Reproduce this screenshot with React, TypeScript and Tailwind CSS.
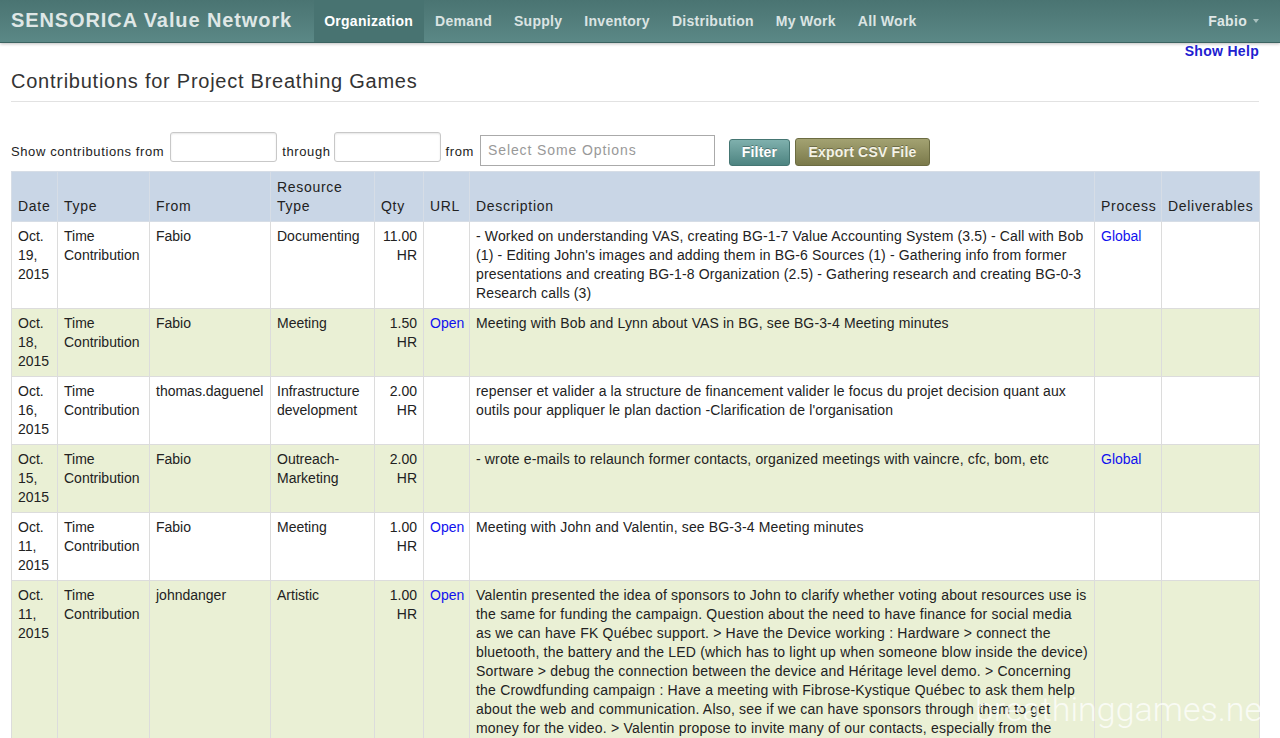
import React from 'react';

type Contribution = {
  date: string;
  type: string;
  from: string;
  resource: string;
  qty: string;
  url?: string;
  description: string;
  process?: string;
  loose?: boolean;
};

const contributions: Contribution[] = [
  {
    date: 'Oct. 19, 2015',
    type: 'Time Contribution',
    from: 'Fabio',
    resource: 'Documenting',
    qty: '11.00 HR',
    description:
      "- Worked on understanding VAS, creating BG-1-7 Value Accounting System (3.5) - Call with Bob (1) - Editing John's images and adding them in BG-6 Sources (1) - Gathering info from former presentations and creating BG-1-8 Organization (2.5) - Gathering research and creating BG-0-3 Research calls (3)",
    process: 'Global',
  },
  {
    date: 'Oct. 18, 2015',
    type: 'Time Contribution',
    from: 'Fabio',
    resource: 'Meeting',
    qty: '1.50 HR',
    url: 'Open',
    description: 'Meeting with Bob and Lynn about VAS in BG, see BG-3-4 Meeting minutes',
  },
  {
    date: 'Oct. 16, 2015',
    type: 'Time Contribution',
    from: 'thomas.daguenel',
    resource: 'Infrastructure development',
    qty: '2.00 HR',
    description:
      "repenser et valider a la structure de financement valider le focus du projet decision quant aux outils pour appliquer le plan daction -Clarification de l'organisation",
  },
  {
    date: 'Oct. 15, 2015',
    type: 'Time Contribution',
    from: 'Fabio',
    resource: 'Outreach-Marketing',
    qty: '2.00 HR',
    description: '- wrote e-mails to relaunch former contacts, organized meetings with vaincre, cfc, bom, etc',
    process: 'Global',
  },
  {
    date: 'Oct. 11, 2015',
    type: 'Time Contribution',
    from: 'Fabio',
    resource: 'Meeting',
    qty: '1.00 HR',
    url: 'Open',
    description: 'Meeting with John and Valentin, see BG-3-4 Meeting minutes',
  },
  {
    date: 'Oct. 11, 2015',
    type: 'Time Contribution',
    from: 'johndanger',
    resource: 'Artistic',
    qty: '1.00 HR',
    url: 'Open',
    loose: true,
    description:
      'Valentin presented the idea of sponsors to John to clarify whether voting about resources use is the same for funding the campaign. Question about the need to have finance for social media as we can have FK Québec support. > Have the Device working : Hardware > connect the bluetooth, the battery and the LED (which has to light up when someone blow inside the device) Sortware > debug the connection between the device and Héritage level demo. > Concerning the Crowdfunding campaign : Have a meeting with Fibrose-Kystique Québec to ask them help about the web and communication. Also, see if we can have sponsors through them to get money for the video. > Valentin propose to invite many of our contacts, especially from the associations and the medical field, to the launch event.',
  },
];

const navItems = ['Organization', 'Demand', 'Supply', 'Inventory', 'Distribution', 'My Work', 'All Work'];

const Navbar: React.FC = () => (
  <div className="h-[43px] bg-gradient-to-b from-[#4a7472] to-[#5b8886] border-b border-[#3b6361] shadow-[0_1px_3px_rgba(0,0,0,0.25)] flex items-stretch pl-[11px] pr-[21px]">
    <div className="text-[20px] font-bold tracking-[0.9px] text-[#dfe7e6] flex items-center mr-[22px] -mt-[2px]">
      SENSORICA Value Network
    </div>
    <ul className="flex items-stretch text-[14px] font-bold tracking-[0.28px]">
      {navItems.map((item, i) => (
        <li
          key={item}
          className={
            i === 0
              ? 'pl-[10px] pr-[11px] flex items-center bg-[#487371] text-white'
              : 'px-[11px] flex items-center text-[#dbe4e3]'
          }
        >
          {item}
        </li>
      ))}
    </ul>
    <div className="ml-auto flex items-center text-[14px] font-bold tracking-[0.3px] text-[#dfe7e6] gap-[6px]">
      Fabio
      <span className="w-0 h-0 border-l-[3px] border-r-[3px] border-t-[4px] border-l-transparent border-r-transparent border-t-[#a9c1bf]" />
    </div>
  </div>
);

const FilterBar: React.FC = () => (
  <div className="flex items-start mt-[30px] text-[13px] tracking-[0.6px] text-[#222]">
    <span className="mt-[10px]">Show contributions from</span>
    <input className="ml-[6px] w-[107px] h-[30px] border border-[#c8c8c8] rounded-[3px] shadow-[inset_0_1px_2px_rgba(0,0,0,0.1)]" />
    <span className="mt-[10px] ml-[5px]">through</span>
    <input className="ml-[3px] w-[107px] h-[30px] border border-[#c8c8c8] rounded-[3px] shadow-[inset_0_1px_2px_rgba(0,0,0,0.1)]" />
    <span className="mt-[10px] ml-[5px]">from</span>
    <div className="ml-[6px] mt-[3px] w-[235px] h-[31px] border border-[#aaa] flex items-center px-[7px] text-[14px] tracking-[0.9px] text-[#999]">
      Select Some Options
    </div>
    <button className="ml-[14px] mt-[7px] w-[61px] h-[27px] rounded-[3px] border border-[#457673] bg-gradient-to-b from-[#7fb0ad] to-[#4d8481] text-white font-bold text-[14px] tracking-[0.2px] [text-shadow:0_-1px_0_rgba(0,0,0,0.3)]">
      Filter
    </button>
    <button className="ml-[5px] mt-[6px] w-[135px] h-[28px] rounded-[3px] border border-[#6c6c42] bg-gradient-to-b from-[#a3a272] to-[#7b7a4b] text-[#f4f3e6] font-bold text-[14px] tracking-[0.2px] [text-shadow:0_-1px_0_rgba(0,0,0,0.3)]">
      Export CSV File
    </button>
  </div>
);

const cellBase = 'border border-[#dcdcdc] px-[6px] pt-[5px] pb-[5px] align-top leading-[19px]';

const ContributionsTable: React.FC = () => (
  <table className="mt-[5px] w-[1248px] table-fixed border-collapse text-[14px] text-[#222]">
    <colgroup>
      <col className="w-[46px]" />
      <col className="w-[92px]" />
      <col className="w-[121px]" />
      <col className="w-[104px]" />
      <col className="w-[49px]" />
      <col className="w-[46px]" />
      <col className="w-[625px]" />
      <col className="w-[67px]" />
      <col className="w-[98px]" />
    </colgroup>
    <thead>
      <tr className="bg-[#c9d6e6]">
        {['Date', 'Type', 'From', 'Resource Type', 'Qty', 'URL', 'Description', 'Process', 'Deliverables'].map((h) => (
          <th
            key={h}
            className="border border-[#d6dde6] px-[6px] pt-[6px] pb-[5px] align-bottom text-left font-normal tracking-[0.7px] leading-[19px] text-[#222]"
          >
            {h}
          </th>
        ))}
      </tr>
    </thead>
    <tbody>
      {contributions.map((c, i) => (
        <tr key={i} className={i % 2 === 1 ? 'bg-[#eaf0d5]' : 'bg-white'}>
          <td className={cellBase}>{c.date}</td>
          <td className={cellBase}>{c.type}</td>
          <td className={cellBase}>{c.from}</td>
          <td className={cellBase}>{c.resource}</td>
          <td className={`${cellBase} text-right`}>{c.qty}</td>
          <td className={`${cellBase} text-[#1010ee]`}>{c.url}</td>
          <td className={`${cellBase} ${c.loose ? 'tracking-[0.2px]' : 'tracking-[0.14px]'}`}>{c.description}</td>
          <td className={`${cellBase} text-[#1010ee]`}>{c.process}</td>
          <td className={cellBase}></td>
        </tr>
      ))}
    </tbody>
  </table>
);

const App: React.FC = () => (
  <div className="relative min-h-[738px] bg-white font-['Liberation_Sans',Arial,sans-serif]">
    <Navbar />
    <div className="pl-[11px] w-[1259px]">
      <div className="h-[18px] -mt-[1px] text-right text-[14px] font-bold tracking-[0.3px] text-[#2020d0] leading-[18px]">
        Show Help
      </div>
      <div className="flex items-end h-[33px] pb-[5px] mt-[9px] text-[20px] text-[#333] tracking-[0.75px] border-b border-[#e2e2e2]">
        Contributions for Project Breathing Games
      </div>
      <FilterBar />
      <ContributionsTable />
    </div>
    <div className="absolute left-[975px] top-[688px] font-['Roboto',sans-serif] font-light text-[34px] leading-[42px] text-white/75 pointer-events-none">
      breathinggames.net
    </div>
  </div>
);

export default App;
